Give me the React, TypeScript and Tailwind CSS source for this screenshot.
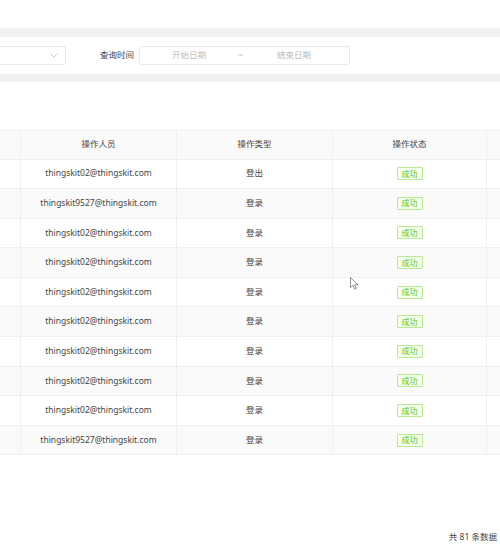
import React from "react";

type Row = {
  user: string;
  type: string;
  status: string;
};

const rows: Row[] = [
  { user: "thingskit02@thingskit.com", type: "登出", status: "成功" },
  { user: "thingskit9527@thingskit.com", type: "登录", status: "成功" },
  { user: "thingskit02@thingskit.com", type: "登录", status: "成功" },
  { user: "thingskit02@thingskit.com", type: "登录", status: "成功" },
  { user: "thingskit02@thingskit.com", type: "登录", status: "成功" },
  { user: "thingskit02@thingskit.com", type: "登录", status: "成功" },
  { user: "thingskit02@thingskit.com", type: "登录", status: "成功" },
  { user: "thingskit02@thingskit.com", type: "登录", status: "成功" },
  { user: "thingskit02@thingskit.com", type: "登录", status: "成功" },
  { user: "thingskit9527@thingskit.com", type: "登录", status: "成功" },
];

const font = "font-['Noto_Sans','Noto_Sans_CJK_SC',sans-serif]";

function Cell({ children, last }: { children?: React.ReactNode; last?: boolean }) {
  return (
    <div
      className={`flex items-center justify-center ${
        last ? "" : "border-r border-[#efeff3]"
      }`}
    >
      {children}
    </div>
  );
}

export default function App() {
  return (
    <div className={`relative h-[550px] w-[500px] overflow-hidden bg-white ${font} text-[#444]`}>
      <div className="h-[28px] bg-white" />
      <div className="h-[9px] bg-[#f0f1f3]" />

      {/* Search form */}
      <div className="flex h-[37px] items-center bg-white">
        <div className="-ml-[4px] flex h-[19px] w-[70px] items-center justify-end rounded-[2px] border border-[#ebe8f0] pr-[7px]">
          <svg width="8" height="5" viewBox="0 0 8 5" fill="none">
            <path d="M0.5 0.5L4 4L7.5 0.5" stroke="#c4c4c4" strokeWidth="0.9" />
          </svg>
        </div>
        <span className="ml-[34px] text-[8.5px] text-[#444]">查询时间</span>
        <div className="ml-[5px] flex h-[19px] w-[211px] items-center rounded-[2px] border border-[#ebe8f0] text-[8.5px] text-[#bbb]">
          <span className="w-[98px] text-center">开始日期</span>
          <span className="text-center text-[#bbb]">~</span>
          <span className="flex-1 pr-[4px] text-center">结束日期</span>
        </div>
      </div>

      <div className="h-[8px] bg-[#f0f1f3]" />

      {/* Table card */}
      <div className="relative h-[468px] bg-white pt-[48px]">
        <div className="grid h-[29.5px] grid-cols-[21px_156px_156px_154px_1fr] border-y border-[#efeff3] bg-[#fafafb] text-[8.5px] text-[#444]">
          <Cell />
          <Cell>操作人员</Cell>
          <Cell>操作类型</Cell>
          <Cell>操作状态</Cell>
          <Cell last />
        </div>
        {rows.map((r, i) => (
          <div
            key={i}
            className={`grid h-[29.6px] grid-cols-[21px_156px_156px_154px_1fr] border-b border-[#efeff3] text-[8.5px] text-[#444] ${
              i % 2 === 1 ? "bg-[#fafafb]" : "bg-white"
            }`}
          >
            <Cell />
            <Cell>{r.user}</Cell>
            <Cell>{r.type}</Cell>
            <Cell>
              <span className="flex h-[13px] items-center rounded-[1px] border border-[#b7eb8f] bg-[#f6ffed] px-[4px] text-[8px] text-[#52c41a]">
                {r.status}
              </span>
            </Cell>
            <Cell last />
          </div>
        ))}

        <div className="absolute bottom-[6px] right-[3px] text-[8.5px] text-[#444]">
          共 81 条数据
        </div>
      </div>

      {/* mouse cursor */}
      <svg
        className="absolute left-[350px] top-[277px]"
        width="9"
        height="13"
        viewBox="0 0 9 13"
      >
        <path
          d="M0.5 0.5L0.5 10.5L3 8.3L4.8 12.2L6.3 11.5L4.6 7.7L8 7.7Z"
          fill="#fff"
          stroke="#777"
          strokeWidth="0.8"
          strokeLinejoin="round"
        />
      </svg>
    </div>
  );
}
